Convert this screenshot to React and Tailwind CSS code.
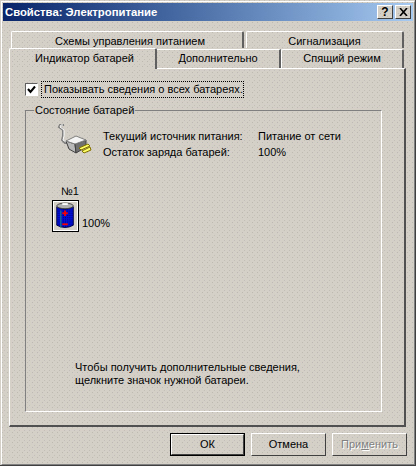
import React from 'react';

const dither = 'bg-[#d4d0c8] bg-[radial-gradient(#bdbab6_0.6px,transparent_0.9px),radial-gradient(#c2bfba_0.6px,transparent_0.9px)] bg-[length:5px_5px] bg-[position:0_0,2px_3px]';
const raised = 'border border-t-white border-l-white border-r-[#404040] border-b-[#404040]';

const PlugIcon = () => (
  <svg width="34" height="32" viewBox="0 0 34 32" className="ml-[32px] shrink-0">
    <path d="M6 1 H2 L1 3 L5 6 L5 12 L4 16 L7 19 L10 19" fill="none" stroke="#808080" strokeWidth="2" />
    <path d="M5 1 H3 L2 3 L6 6 L6 12 L5 16 L8 18" fill="none" stroke="#fff" strokeWidth="1" />
    <path d="M8 17 L17 20 L18 29 L11 25 Z" fill="#b8b8b8" stroke="#404040" strokeWidth="1" />
    <path d="M17 20 L28 16 L28 23 L18 29 Z" fill="#707070" stroke="#404040" strokeWidth="1" />
    <path d="M8 17 L18 12 L28 16 L17 20 Z" fill="#f4f4f4" stroke="#808080" strokeWidth="1" />
    <path d="M21 24 L30 20 L32 22 L23 26 Z" fill="#ffff66" stroke="#807000" strokeWidth="1" />
    <path d="M24 27 L32 23 L33 26 L26 29 Z" fill="#ffff66" stroke="#807000" strokeWidth="1" />
  </svg>
);

const BatteryIcon = () => (
  <div className="w-[27px] h-[32px] border border-black bg-[#d4d0c8] shrink-0">
    <svg width="25" height="30" viewBox="0 0 25 30" className="border border-white">
      <defs>
        <pattern id="blue" width="2" height="2" patternUnits="userSpaceOnUse">
          <rect width="2" height="2" fill="#0010d8" />
          <rect width="1" height="1" fill="#000080" />
        </pattern>
      </defs>
      <path d="M3 5 V25 Q12 30 21 25 V5 Q12 10 3 5 Z" fill="url(#blue)" stroke="#000040" />
      <ellipse cx="12" cy="4" rx="9" ry="3" fill="#b0b0b0" stroke="#404040" />
      <rect x="9" y="1" width="6" height="2" fill="#fff" />
      <rect x="7" y="9" width="1" height="19" fill="#20a080" />
      <rect x="9" y="11" width="6" height="2" fill="#f00000" />
      <rect x="11" y="9" width="2" height="6" fill="#f00000" />
      <rect x="9" y="23" width="6" height="2" fill="#f00000" />
    </svg>
  </div>
);

const BackTab = ({ className, label }) => (
  <div className={`h-[17px] border-t border-l border-r-2 border-t-white border-l-white border-r-[#606060] rounded-t-[2px] text-center leading-[18px] ${className}`}>
    {label}
  </div>
);

const Button = ({ label, className = '', children }) => (
  <div className={`flex items-center justify-center ${raised} ${className}`}>
    {children || label}
  </div>
);

export default function App() {
  return (
    <div
      className={`w-[416px] h-[466px] overflow-hidden flex flex-col p-[1px] pr-0 pb-0 text-[11px] leading-[13px] text-black border-r border-b border-[#404040] ${dither}`}
      style={{ fontFamily: '"Liberation Sans", Arial, sans-serif' }}
    >
      <div className="flex-1 flex flex-col border-l border-t border-white border-r border-b border-r-[#808080] border-b-[#808080] p-[1px]">
        {/* title bar */}
        <div className="h-[18px] flex items-center justify-between pl-[2px] pr-[2px] bg-gradient-to-r from-[#0a246a] to-[#a6caf0] text-white font-bold text-[11.3px]">
          <span>Свойства: Электропитание</span>
          <div className="flex gap-[2px]">
            <div className={`w-[16px] h-[14px] flex items-center justify-center text-black text-[12px] font-bold ${raised} ${dither}`}>?</div>
            <div className={`w-[16px] h-[14px] flex items-center justify-center ${raised} ${dither}`}>
              <svg width="9" height="8" viewBox="0 0 9 8">
                <path d="M1 0 L8 8 M8 0 L1 8" stroke="#000" strokeWidth="1.6" />
              </svg>
            </div>
          </div>
        </div>

        {/* tabs and page */}
        <div className="flex-1 flex flex-col pl-[6px] pr-[6px] pt-[10px]">
          <div className="flex gap-[2px] pl-[2px] pr-[2px]">
            <BackTab className="w-[233px] pl-[6px]" label="Схемы управления питанием" />
            <BackTab className="w-[158px]" label="Сигнализация" />
          </div>
          <div className="flex h-[20px] pr-[2px]">
            <div className={`relative z-10 w-[148px] h-[21px] border-t border-l border-r-2 border-t-white border-l-white border-r-[#606060] rounded-t-[2px] flex items-start pt-[3px] pl-[4px] justify-center ${dither}`}>
              Индикатор батарей
            </div>
            <div className="w-[124px] h-[19px] mt-[1px] border-t border-r-2 border-t-white border-r-[#606060] text-center leading-[17px]">Дополнительно</div>
            <div className="w-[123px] h-[19px] mt-[1px] border-t border-l border-r-2 border-t-white border-l-white border-r-[#606060] rounded-t-[2px] text-center leading-[17px]">Спящий режим</div>
          </div>

          <div className="w-[397px] h-[359px] border-t border-l border-r-2 border-b-2 border-t-white border-l-white border-r-[#505050] border-b-[#505050] pt-[12px] pl-[15px]">
            <label className="flex items-center h-[16px]">
              <span className="w-[13px] h-[13px] bg-white border border-t-[#606060] border-l-[#606060] border-r-white border-b-white flex items-center justify-center shrink-0">
                <svg width="9" height="9" viewBox="0 0 9 9">
                  <path d="M1 4 L3.5 7 L8 1.5" fill="none" stroke="#000" strokeWidth="2" />
                </svg>
              </span>
              <span className="ml-[3px] px-[2px] h-[17px] w-[203px] whitespace-nowrap border border-dotted border-black leading-[15px]">Показывать сведения о всех батареях.</span>
            </label>

            <fieldset className="mt-[7px] w-[357px] h-[308px] border border-t-[#808080] border-l-[#808080] border-r-white border-b-white flex flex-col">
              <legend className="ml-[8px] px-[1px] leading-[13px]">Состояние батарей</legend>
              <div className="flex items-start mt-[7px]">
                <PlugIcon />
                <div className="ml-[11px] mt-[6px] grid grid-cols-[155px_1fr] gap-y-[3px]">
                  <span>Текущий источник питания:</span>
                  <span>Питание от сети</span>
                  <span>Остаток заряда батарей:</span>
                  <span>100%</span>
                </div>
              </div>
              <div className="ml-[35px] mt-[26px]">№1</div>
              <div className="flex items-center ml-[26px] mt-[2px]">
                <BatteryIcon />
                <span className="ml-[3px] mt-[14px]">100%</span>
              </div>
              <p className="ml-[49px] mt-[129px] leading-[13px]">
                Чтобы получить дополнительные сведения,
                <br />
                щелкните значок нужной батареи.
              </p>
            </fieldset>
          </div>

          {/* buttons */}
          <div className="flex justify-end gap-[6px] mt-[6px] text-[11px]">
            <div className="border border-black w-[75px] h-[23px] flex">
              <Button className="w-full" label="ОК" />
            </div>
            <Button className="w-[75px] h-[23px]" label="Отмена" />
            <Button className="w-[75px] h-[23px]">
              <span className="text-[#808080] [text-shadow:1px_1px_0_#fff]">
                При<span className="underline">м</span>енить
              </span>
            </Button>
          </div>
        </div>
      </div>
    </div>
  );
}
